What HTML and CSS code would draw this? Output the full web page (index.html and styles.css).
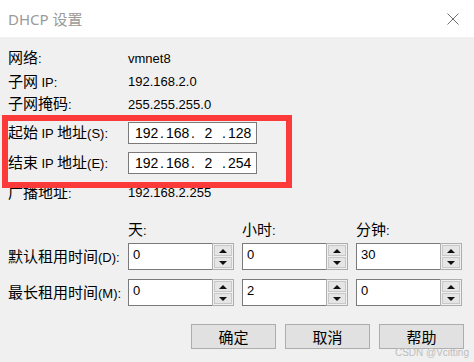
FILE: index.html
```html
<!DOCTYPE html>
<html lang="zh-CN">
<head>
<meta charset="utf-8">
<title>DHCP 设置</title>
<link rel="stylesheet" href="styles.css">
</head>
<body>
<div class="window">
  <div class="titlebar">
    <span class="title">DHCP 设置</span>
    <svg class="close" width="12" height="12" viewBox="0 0 12 12"><path d="M0.5 0.5 L11.5 11.5 M11.5 0.5 L0.5 11.5" stroke="#6f6f6f" stroke-width="1" fill="none"/></svg>
  </div>
  <div class="body">
    <div class="info">
      <div class="row r1"><span class="label">网络<span class="lat">:</span></span><span class="value">vmnet8</span></div>
      <div class="row r2"><span class="label">子网 <span class="lat">IP:</span></span><span class="value">192.168.2.0</span></div>
      <div class="row r3"><span class="label">子网掩码<span class="lat">:</span></span><span class="value">255.255.255.0</span></div>
      <div class="row r4"><span class="label">起始 <span class="lat">IP</span> 地址<span class="lat">(S):</span></span>
        <div class="ip"><span class="oct">192</span><span class="dot">.</span><span class="oct">168</span><span class="dot">.</span><span class="oct">2</span><span class="dot">.</span><span class="oct">128</span></div></div>
      <div class="row r5"><span class="label">结束 <span class="lat">IP</span> 地址<span class="lat">(E):</span></span>
        <div class="ip"><span class="oct">192</span><span class="dot">.</span><span class="oct">168</span><span class="dot">.</span><span class="oct">2</span><span class="dot">.</span><span class="oct">254</span></div></div>
      <div class="row r6"><span class="label">广播地址<span class="lat">:</span></span><span class="value">192.168.2.255</span></div>
    </div>

    <div class="lease">
      <div class="lrow heads">
        <span class="label"></span>
        <span class="head">天<span class="lat">:</span></span>
        <span class="head">小时<span class="lat">:</span></span>
        <span class="head">分钟<span class="lat">:</span></span>
      </div>
      <div class="lrow spins s1">
        <span class="label">默认租用时间<span class="lat">(D):</span></span>
        <div class="spin"><span class="sval">0</span><span class="sbtns"><span class="sb up"></span><span class="sb down"></span></span></div>
        <div class="spin"><span class="sval">0</span><span class="sbtns"><span class="sb up"></span><span class="sb down"></span></span></div>
        <div class="spin"><span class="sval">30</span><span class="sbtns"><span class="sb up"></span><span class="sb down"></span></span></div>
      </div>
      <div class="lrow spins s2">
        <span class="label">最长租用时间<span class="lat">(M):</span></span>
        <div class="spin"><span class="sval">0</span><span class="sbtns"><span class="sb up"></span><span class="sb down"></span></span></div>
        <div class="spin"><span class="sval">2</span><span class="sbtns"><span class="sb up"></span><span class="sb down"></span></span></div>
        <div class="spin"><span class="sval">0</span><span class="sbtns"><span class="sb up"></span><span class="sb down"></span></span></div>
      </div>
    </div>

    <div class="buttons">
      <button class="btn">确定</button>
      <button class="btn">取消</button>
      <button class="btn">帮助</button>
    </div>

    <div class="highlight"></div>
    <div class="watermark">CSDN @Vcitting</div>
  </div>
</div>
</body>
</html>
```
FILE: styles.css
```css
* { box-sizing: border-box; }
html, body { margin: 0; padding: 0; background: #f0f0f0; }
body { font-family: "Noto Sans CJK SC", sans-serif; color: #000; }

.window { width: 474px; height: 362px; position: relative; overflow: hidden; background: #f0f0f0; }

.titlebar {
  height: 37px; background: #fff; display: flex; align-items: center;
  justify-content: space-between; padding: 0 15px 0 8px;
}
.title { font-family: "Noto Sans", "Noto Sans CJK SC", sans-serif; font-size: 15px; color: #9a9a9a; line-height: 20px; margin-top: 1px; }
.close { display: block; }

.body { position: relative; height: 325px; padding-top: 9px; }

.lat { font-family: "Liberation Sans", sans-serif; font-size: 13px; }
.label { width: 120px; flex: none; font-size: 15px; line-height: 20px; white-space: nowrap; }
.value { font-family: "Liberation Sans", sans-serif; font-size: 13px; }

.info { padding-left: 8px; }
.row { display: flex; align-items: center; }
.r1 { height: 24px; }
.r2 { height: 23px; }
.r3 { height: 22px; }
.r4 { height: 22px; margin-top: 7px; }
.r5 { height: 22px; margin-top: 8px; }
.r6 { height: 23px; margin-top: 7px; }

.ip {
  width: 129px; height: 22px; background: #fff; border: 1px solid #7a7a7a;
  display: flex; align-items: center; padding-left: 6px;
  font-family: "Liberation Sans", sans-serif; font-size: 14px;
}
.oct { width: 23px; text-align: center; }
.dot { width: 8px; text-align: center; }

.lease { padding-left: 8px; }
.lrow { display: flex; align-items: center; }
.lrow > .spin, .lrow > .head { margin-left: 8px; }
.lrow > .label + .spin, .lrow > .label + .head { margin-left: 0; }
.heads { height: 22px; margin-top: 15px; }
.head { width: 106px; font-size: 15px; line-height: 20px; }
.spins { height: 27px; }
.s1 { margin-top: 2px; }
.s2 { margin-top: 9px; }

.spin { width: 106px; height: 27px; display: flex; }
.sval {
  flex: 1; background: #fff; border: 1px solid #7a7a7a; border-right: none;
  font-family: "Liberation Sans", sans-serif; font-size: 13px; line-height: 15px;
  padding: 3px 0 0 4px;
}
.sbtns {
  width: 22px; border: 1px solid #adadad; background: #f0f0f0;
  display: flex; flex-direction: column; padding: 1px; gap: 1px;
}
.sb {
  flex: 1; background: #e5e5e5; border: 1px solid #c8c8c8;
  display: flex; align-items: center; justify-content: center;
}
.sb::after { content: ""; width: 0; height: 0; border-left: 4px solid transparent; border-right: 4px solid transparent; }
.up::after { border-bottom: 4px solid #111; }
.down::after { border-top: 4px solid #111; }

.buttons { display: flex; justify-content: flex-end; gap: 9px; padding-right: 10px; margin-top: 18px; }
.btn {
  width: 85px; height: 25px; background: #e1e1e1; border: 1px solid #adadad;
  font-family: "Noto Sans CJK SC", sans-serif; font-size: 15px; color: #000;
  padding: 0; line-height: 20px; margin: 0;
}

.highlight {
  position: absolute; left: 2px; top: 78px; width: 290px; height: 73px;
  border: 6px solid #fc3a3a; z-index: 2;
}
.watermark {
  position: absolute; right: 5px; bottom: 4px; font-family: "Liberation Sans", sans-serif;
  font-size: 10px; color: #bdbdbd; z-index: 3;
}
```
